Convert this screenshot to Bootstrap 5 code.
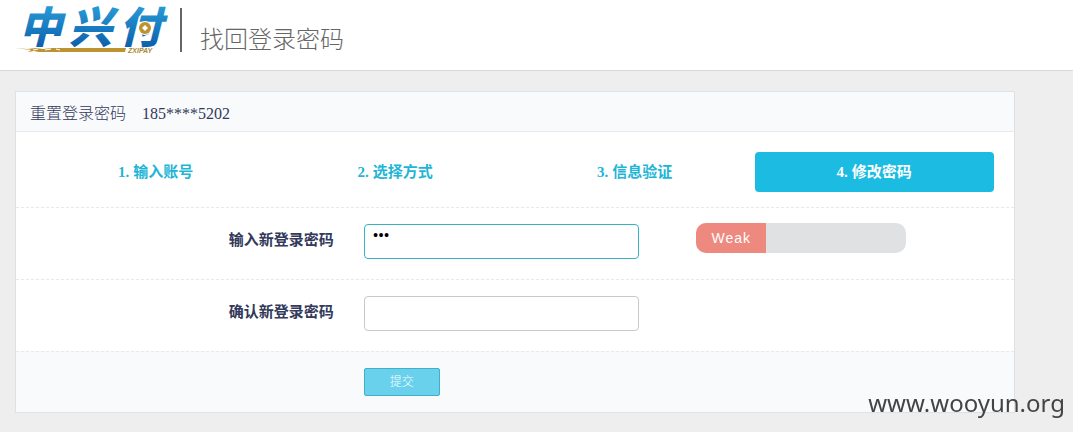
<!DOCTYPE html>
<html lang="zh-CN">
<head>
<meta charset="utf-8">
<meta name="viewport" content="width=device-width, initial-scale=1">
<title>找回登录密码</title>
<link rel="stylesheet" href="https://cdn.jsdelivr.net/npm/bootstrap@5.3.0/dist/css/bootstrap.min.css">
<style>
  body { background: #eee; color: #32395a; font: 15px/20px "Liberation Serif", "Noto Sans CJK SC", sans-serif; }
  .site-head { border-bottom: 1px solid #d9d9d9; height: 71px; padding: 8px 15px; }
  .logo { width: 152px; height: 46px; overflow: visible; }
  .page-title { border-left: 2px solid #666; color: #666; font-size: 24px; font-weight: 300; line-height: 30px; height: 44px; margin-left: 13px; padding: 17px 0 0 18px; }
  .page-main { padding: 20px 15px; }
  .panel { max-width: 1000px; border: 1px solid #dfe2e5; }
  .panel-head { background: #f9fafc; border-bottom: 1px solid #e8ebee; font-size: 16px; font-weight: 300; padding: 12px 14px 7px; }
  .steps { padding: 20px 20px 15px; }
  .steps a { color: #1fb5d6; border-radius: 4px; line-height: 20px; padding: 10px; }
  .steps a.active { background: #1cbbe2; color: #fff; }
  .line { border-top: 1px dashed #e6eaee; }
  .field-row { padding: 16px 0 20px; --bs-gutter-x: 30px; }
  .field-row label { padding-top: 6px; }
  .field-row .form-control { max-width: 275px; height: 35px; border-color: #c7c9cd; border-radius: 4px; font-size: 16px; line-height: 16px; padding: 3px 8px 14px; color: #000; }
  .field-row .form-control.current { border-color: #36b3c4; }
  .meter { width: 210px; height: 30px; border-radius: 10px; background: #e0e1e3; margin-top: -1px; }
  .meter .progress-bar { background: #ee8980; font: 14px/30px "Liberation Sans", sans-serif; letter-spacing: 1px; }
  .panel-foot { background: #f9fafc; padding: 16px 0; --bs-gutter-x: 30px; }
  .btn-send { width: 76px; height: 28px; padding: 0; border: 1px solid #3fb0c8; border-radius: 2px; background: #69d1eb; color: #fff; font-size: 12px; font-weight: 300; line-height: 20px; }
  .watermark { right: 8px; bottom: 12px; color: #444; font: 24px/34px "Noto Sans", sans-serif; }
</style>
</head>
<body>
<header class="site-head bg-white d-flex">
  <svg class="logo" viewBox="0 0 152 46" role="img" aria-label="中兴付 ZXIPAY">
    <defs>
      <linearGradient id="blue" gradientUnits="userSpaceOnUse" x1="0" y1="0" x2="0" y2="38"><stop offset="0" stop-color="#2698d5"/><stop offset="1" stop-color="#0d61ac"/></linearGradient>
    </defs>
    <g fill="url(#blue)" font-family="Noto Sans CJK SC, sans-serif" font-size="43" font-weight="900" font-style="italic">
      <text x="4 54 104" y="35">中兴付</text>
    </g>
    <circle cx="130" cy="20" r="7" fill="#fff"/>
    <circle cx="130" cy="20" r="6" fill="#bd932f"/>
    <path d="M130 17l3 3-3 3-3-3z" fill="#fff"/>
    <path d="M0 40l12 1 9-1 7 1 9-1h74l-1 4H24l-5-1-6 1 3-2z" fill="#bd932f"/>
    <path d="M18 42l5-1M30 42l6-1M41 41l4 1M8 43l7-1" stroke="#fff"/>
    <text x="113" y="45" fill="#a98835" font-family="Liberation Sans, sans-serif" font-size="7" font-weight="700" font-style="italic">ZXIPAY</text>
  </svg>
  <h1 class="page-title mb-0">找回登录密码</h1>
</header>

<main class="page-main">
  <form class="panel bg-white">
    <div class="panel-head">重置登录密码<span class="ms-3">185****5202</span></div>
    <nav class="steps nav nav-fill flex-nowrap fw-bold text-center">
      <a class="w-25 text-decoration-none" href="#"><span class="me-1">1.</span>输入账号</a>
      <a class="w-25 text-decoration-none" href="#"><span class="me-1">2.</span>选择方式</a>
      <a class="w-25 text-decoration-none" href="#"><span class="me-1">3.</span>信息验证</a>
      <a class="w-25 text-decoration-none active" href="#" aria-current="step"><span class="me-1">4.</span>修改密码</a>
    </nav>
    <div class="line field-row row mx-0">
      <label class="col-4 text-end fw-bold" for="pw">输入新登录密码</label>
      <div class="col-4"><input class="form-control current" id="pw" type="password" value="123"></div>
      <div class="col-4"><div class="progress meter"><div class="progress-bar" role="progressbar" aria-valuenow="33" aria-valuemin="0" aria-valuemax="100" style="width: 33.33%">Weak</div></div></div>
    </div>
    <div class="line field-row row mx-0">
      <label class="col-4 text-end fw-bold" for="pw2">确认新登录密码</label>
      <div class="col-4"><input class="form-control" id="pw2" type="password"></div>
    </div>
    <div class="line panel-foot row mx-0">
      <div class="col-8 offset-4"><button class="btn btn-send d-block" type="submit">提交</button></div>
    </div>
  </form>
</main>
<div class="watermark position-fixed">www.wooyun.org</div>
<script src="https://cdn.jsdelivr.net/npm/bootstrap@5.3.0/dist/js/bootstrap.bundle.min.js"></script>
</body>
</html>
